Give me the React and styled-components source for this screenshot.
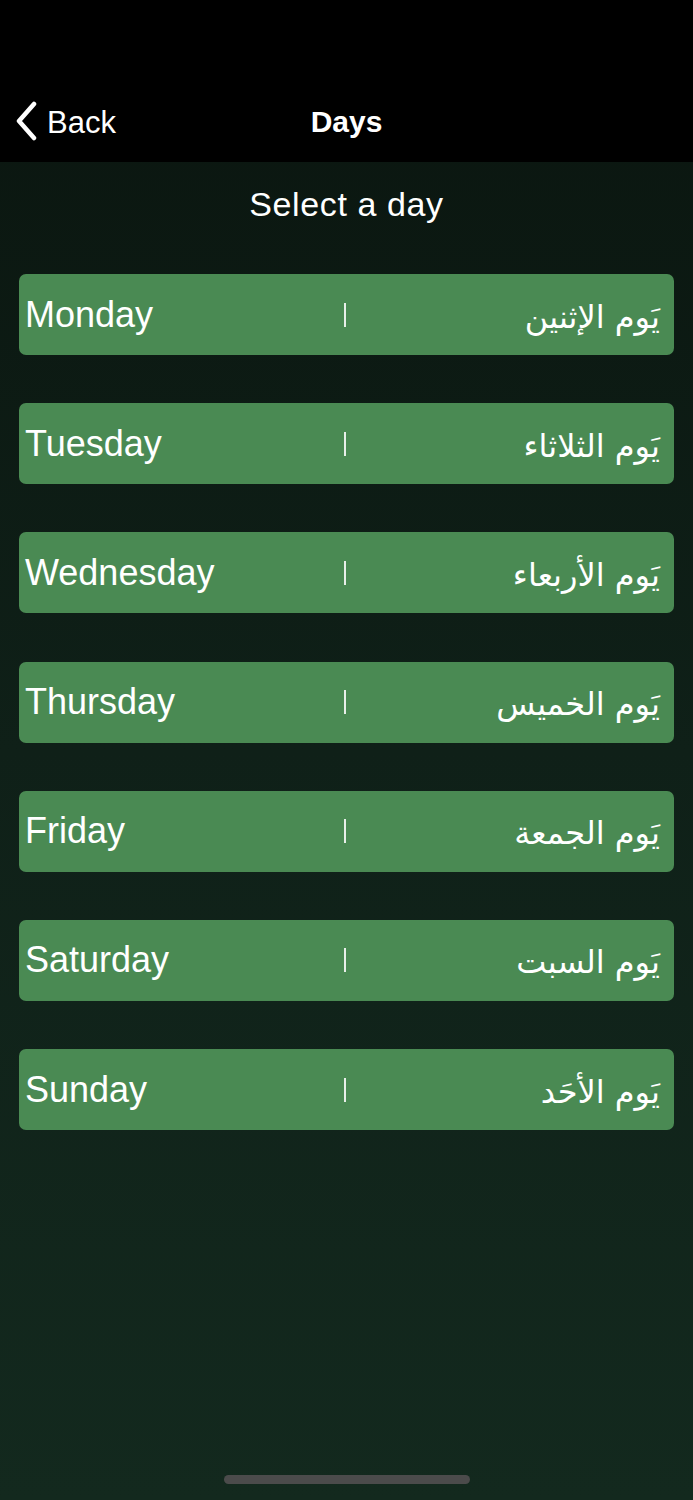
import React from 'react';
import styled, { createGlobalStyle } from 'styled-components';

const GlobalStyle = createGlobalStyle`
  html, body {
    margin: 0;
    padding: 0;
    background: #000;
  }
  * {
    box-sizing: border-box;
  }
`;

const Screen = styled.div`
  display: flex;
  flex-direction: column;
  width: 693px;
  min-height: 1500px;
  font-family: "Liberation Sans", Arial, sans-serif;
  color: #fff;
  background: linear-gradient(180deg, #0a150f 0%, #0f2018 50%, #13291e 100%);
`;

const Header = styled.header`
  background: #000;
  padding-top: 80px;
  height: 162px;
`;

const NavBar = styled.div`
  position: relative;
  display: flex;
  align-items: center;
  justify-content: center;
  height: 82px;
`;

const BackButton = styled.button`
  position: absolute;
  left: 14px;
  top: 0;
  bottom: 0;
  display: flex;
  align-items: center;
  gap: 9px;
  padding: 3px 0 0;
  border: none;
  background: none;
  color: #fff;
  font-family: inherit;
  font-size: 31px;
  cursor: pointer;

  svg {
    margin-top: -3px;
  }
`;

const Title = styled.h1`
  margin: 0;
  padding-top: 2px;
  font-size: 30px;
  font-weight: bold;
`;

const Main = styled.main`
  flex: 1;
  display: flex;
  flex-direction: column;
  padding: 0 19px;
`;

const Heading = styled.h2`
  margin: 0;
  height: 84px;
  display: flex;
  align-items: center;
  justify-content: center;
  font-size: 34px;
  font-weight: normal;
  letter-spacing: 0.6px;
`;

const DayList = styled.ul`
  list-style: none;
  margin: 28px 0 0;
  padding: 0;
  display: flex;
  flex-direction: column;
  gap: 48.2px;
`;

const DayCard = styled.li`
  display: grid;
  grid-template-columns: 1fr auto 1fr;
  align-items: center;
  height: 81px;
  padding: 0 10px 0 6px;
  border-radius: 7px;
  background: #4a8a53;
  cursor: pointer;
`;

const English = styled.span`
  font-size: 36px;
  line-height: 1;
`;

const Divider = styled.span`
  width: 2px;
  height: 24px;
  background: #e8efe9;
`;

const Arabic = styled.span`
  justify-self: end;
  margin-right: 4px;
  padding-top: 4px;
  direction: rtl;
  font-family: "DejaVu Sans", "Noto Sans", sans-serif;
  font-size: 32px;
  line-height: 1;
`;

const Footer = styled.div`
  display: flex;
  justify-content: center;
  padding: 0 0 16px;
`;

const HomeIndicator = styled.div`
  width: 246px;
  height: 9px;
  border-radius: 5px;
  background: #4b4b4b;
`;

const Chevron = () => (
  <svg width="24" height="40" viewBox="0 0 24 40" fill="none">
    <path
      d="M20 3 L5 20 L20 37"
      stroke="#fff"
      strokeWidth="4.5"
      strokeLinecap="round"
      strokeLinejoin="round"
    />
  </svg>
);

const days = [
  { en: 'Monday', ar: 'يَوم الإثنين' },
  { en: 'Tuesday', ar: 'يَوم الثلاثاء' },
  { en: 'Wednesday', ar: 'يَوم الأربعاء' },
  { en: 'Thursday', ar: 'يَوم الخميس' },
  { en: 'Friday', ar: 'يَوم الجمعة' },
  { en: 'Saturday', ar: 'يَوم السبت' },
  { en: 'Sunday', ar: 'يَوم الأحَد' },
];

const App = () => {
  return (
    <Screen>
      <GlobalStyle />
      <Header>
        <NavBar>
          <BackButton>
            <Chevron />
            Back
          </BackButton>
          <Title>Days</Title>
        </NavBar>
      </Header>
      <Main>
        <Heading>Select a day</Heading>
        <DayList>
          {days.map((d) => (
            <DayCard key={d.en}>
              <English>{d.en}</English>
              <Divider />
              <Arabic>{d.ar}</Arabic>
            </DayCard>
          ))}
        </DayList>
      </Main>
      <Footer>
        <HomeIndicator />
      </Footer>
    </Screen>
  );
};

export default App;
